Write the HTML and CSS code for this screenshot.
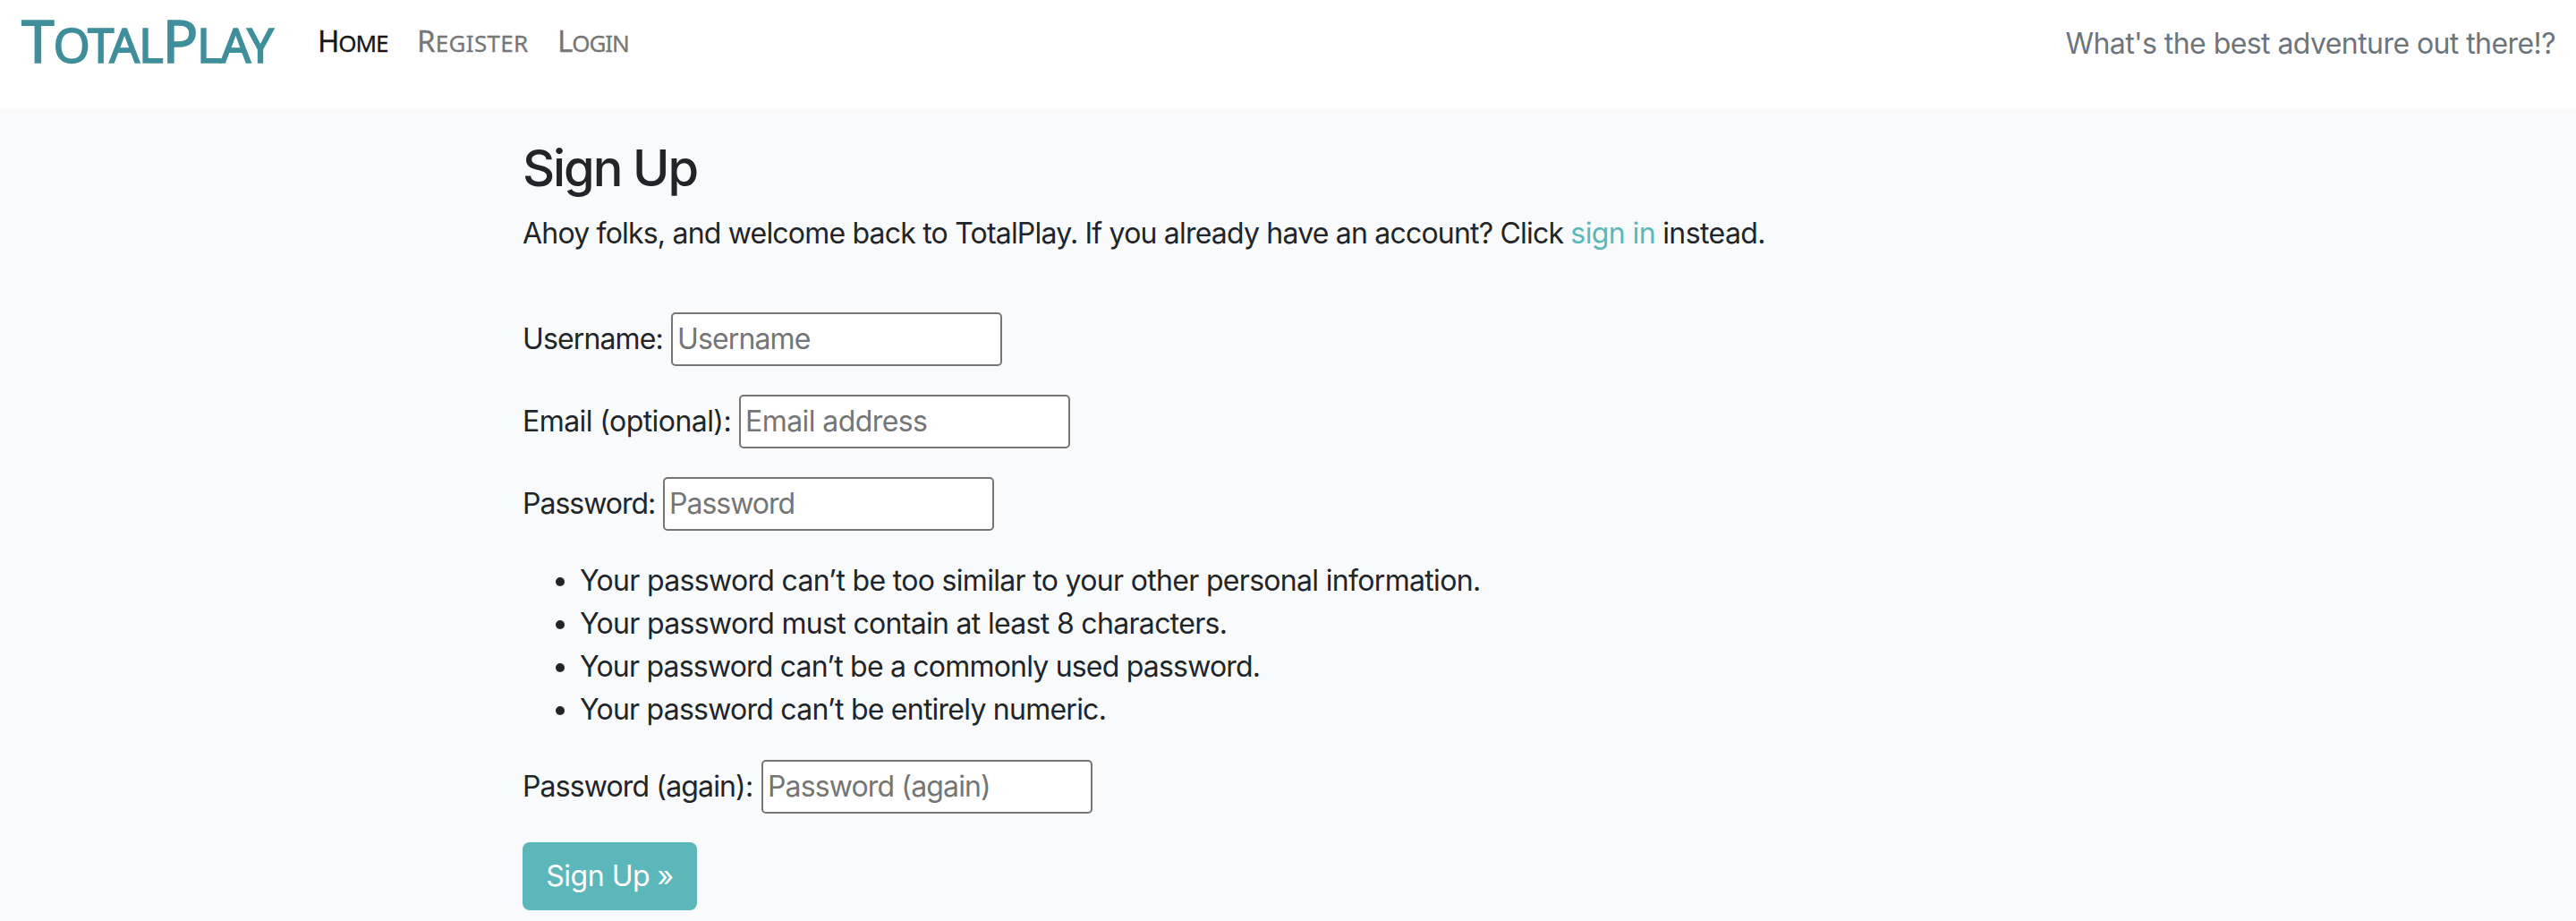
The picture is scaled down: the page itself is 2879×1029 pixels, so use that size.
FILE: index.html
```html
<!DOCTYPE html>
<html lang="en">
<head>
<meta charset="utf-8">
<title>TotalPlay</title>
<link rel="stylesheet" href="styles.css">
</head>
<body>
<header class="navbar">
  <a class="brand" href="#"><b>T</b>OTAL<b>P</b>LAY</a>
  <nav class="nav">
    <a class="nav-link home" href="#"><b>H</b>OME</a>
    <a class="nav-link register" href="#"><b>R</b>EGISTER</a>
    <a class="nav-link login" href="#"><b>L</b>OGIN</a>
  </nav>
  <span class="tagline">What's the best adventure out there!?</span>
</header>
<main class="container">
  <h1>Sign Up</h1>
  <p class="intro">Ahoy folks, and welcome back to TotalPlay. If you already have an account? Click <a href="#">sign in</a> <span class="tail">instead.</span></p>
  <form class="form">
    <div class="field username"><label for="username">Username:</label><input id="username" type="text" placeholder="Username"></div>
    <div class="field email"><label for="email">Email (optional):</label><input id="email" type="email" placeholder="Email address"></div>
    <div class="field password"><label for="password1">Password:</label><input id="password1" type="password" placeholder="Password"></div>
    <ul class="rules">
      <li>Your password can’t be too similar to your other personal information.</li>
      <li>Your password must contain at least 8 characters.</li>
      <li>Your password can’t be a commonly used password.</li>
      <li>Your password can’t be entirely numeric.</li>
    </ul>
    <div class="field again"><label for="password2">Password (again):</label><input id="password2" type="password" placeholder="Password (again)"></div>
    <button class="btn" type="button">Sign Up »</button>
  </form>
</main>
</body>
</html>
```
FILE: styles.css
```css
* { box-sizing: border-box; }
body {
  margin: 0;
  min-height: 1029px;
  background: #f9fafc;
  color: #212529;
  font: 32px/48px Inter, sans-serif;
}
a { text-decoration: none; }
.navbar {
  display: flex;
  align-items: flex-start;
  height: 122px;
  padding: 0 23px 0 24px;
  background: #fff;
}
.brand, .nav { font-family: "Noto Sans", sans-serif; }
.brand {
  width: 331px;
  padding-top: 4px;
  color: #3f8e9b;
  font-size: 53px;
  font-weight: 400;
  line-height: 80px;
  letter-spacing: -1.3px;
  -webkit-text-stroke: 1.5px #3f8e9b;
}
.brand b { font-size: 66px; font-weight: 400; }
.nav { display: flex; padding-top: 22px; }
.nav-link { color: #767676; font-size: 26px; -webkit-text-stroke: 0.3px; }
.nav-link b { font-size: 33px; font-weight: 400; }
.home { width: 111px; color: #161616; letter-spacing: -1.1px; }
.register { width: 157px; letter-spacing: 0.3px; }
.login { letter-spacing: -1.1px; }
.tagline {
  margin-left: auto;
  padding-top: 25px;
  color: #6c757d;
  letter-spacing: -0.57px;
}
.container { padding: 32px 0 0 584px; }
h1 {
  margin: 0 0 16px;
  font-size: 56px;
  font-weight: 550;
  line-height: 68px;
  letter-spacing: -2.1px;
}
.intro { margin: -1px 0 64px; letter-spacing: -0.8px; }
.intro a { color: #5bb7ba; letter-spacing: -0.6px; }
.tail { letter-spacing: -0.6px; }
.form { display: flex; flex-direction: column; align-items: flex-start; gap: 32px; }
.field { display: flex; align-items: center; }
.username label { width: 166px; }
.email label { width: 242px; }
.password label { width: 157px; }
.again label { width: 267px; }
.username, .again { letter-spacing: -0.86px; }
.email { letter-spacing: -0.57px; }
.password { letter-spacing: -1px; }
input {
  width: 370px;
  height: 60px;
  padding: 1px 5px 3px;
  border: 2px solid #767676;
  border-radius: 5px;
  background: #fff;
  font: inherit;
  letter-spacing: inherit;
}
input::placeholder { color: #757575; opacity: 1; }
.rules { margin: 0; padding-left: 64px; letter-spacing: -0.8px; }
.rules li:nth-child(-n+2) { letter-spacing: -0.68px; }
.rules li:last-child { letter-spacing: -0.76px; }
.btn {
  width: 195px;
  height: 76px;
  padding: 0;
  border: 0;
  border-radius: 8px;
  background: #5bb7ba;
  color: #fff;
  font: inherit;
  letter-spacing: -0.5px;
}
```
